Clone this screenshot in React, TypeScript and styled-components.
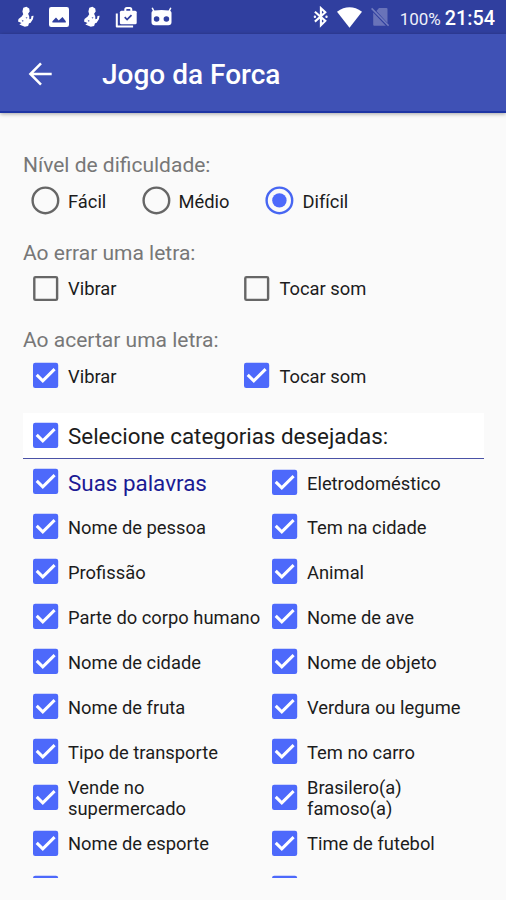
import React from "react";
import styled, { createGlobalStyle, css } from "styled-components";

const GlobalStyle = createGlobalStyle`
  * { box-sizing: border-box; }
  body { margin: 0; background: #fafafa; font-family: Roboto, "Liberation Sans", sans-serif; }
`;

const Screen = styled.div`
  display: flex;
  flex-direction: column;
  width: 506px;
  height: 900px;
  overflow: hidden;
  background: #fafafa;
`;

const StatusBar = styled.div`
  display: flex;
  justify-content: space-between;
  flex: none;
  height: 34px;
  padding: 0 11px 0 17px;
  background: #303f9f;
  color: #fff;
`;

const StatusGroup = styled.div<{ $gap: number }>`
  display: flex;
  align-items: center;
  gap: ${(p) => p.$gap}px;
  svg { display: block; flex: none; }
`;

const Readout = styled.div`
  display: flex;
  align-items: center;
  gap: 4px;
  margin-left: 3px;
  line-height: 24px;
  padding-top: 3px;
`;

const Battery = styled.span`
  font-size: 17px;
  color: #eef0fa;
`;

const Clock = styled.span`
  font-size: 19.8px;
  font-weight: 500;
`;

const AppBar = styled.header`
  display: flex;
  align-items: center;
  flex: none;
  height: 79px;
  padding: 0 26px;
  gap: 48px;
  background: #3f51b5;
  border-bottom: 2px solid #1e35a4;
  box-shadow: 0 1px 4px rgba(0, 0, 0, 0.35);
  color: #fff;
  svg { display: block; margin-top: 2px; }
`;

const Title = styled.h1`
  margin: 0;
  padding-top: 5px;
  font-size: 28px;
  line-height: 34px;
  font-weight: 500;
`;

const Content = styled.main`
  display: flex;
  flex-direction: column;
  padding: 39px 22px 0 23px;
`;

const Section = styled.section`
  display: flex;
  flex-direction: column;
  height: 87.5px;
`;

const SectionLabel = styled.h2`
  margin: 0;
  height: 26px;
  font-size: 21px;
  line-height: 26px;
  font-weight: 400;
  color: #777;
`;

const OptionRow = styled.div<{ $columns: string }>`
  display: grid;
  grid-template-columns: ${(p) => p.$columns};
  height: 45px;
  padding-left: 8px;
`;

const Option = styled.label<{ $tall?: boolean; $drop?: number }>`
  display: flex;
  align-items: center;
  gap: 8px;
  height: ${(p) => (p.$tall ? 46 : 45)}px;
  padding-top: ${(p) => p.$drop ?? 0}px;
  svg { display: block; flex: none; }
`;

const OptionText = styled.span<{ $large?: boolean; $accent?: boolean }>`
  padding-top: 2.4px;
  font-size: 18.35px;
  line-height: 21.5px;
  white-space: pre-line;
  color: #1c1c1c;
  ${(p) => p.$large && css`font-size: 22.4px; line-height: 28px;`}
  ${(p) => p.$accent && css`color: #1a1a94;`}
`;

const CategoryHeader = styled.div`
  display: flex;
  flex: none;
  height: 46.5px;
  margin-top: -2px;
  padding-left: 8px;
  background: #fff;
  border-bottom: 1px solid #4a52a6;
`;

const CategoryList = styled.div`
  display: grid;
  grid-template-columns: 239px 1fr;
  align-content: start;
  height: 419px;
  padding-left: 8px;
  overflow: hidden;
`;

function Check({ on = true }: { on?: boolean }) {
  return (
    <svg width="29" height="29" viewBox="0 0 29 29" fill="none">
      {on ? (
        <>
          <rect x="2" y="1.8" width="25.2" height="25.2" rx="2.2" fill="#4d69fb" />
          <path d="M5.7 13.9l6.1 6L23.6 8.1" stroke="#fff" strokeWidth="3" />
        </>
      ) : (
        <rect x="3.3" y="3.1" width="22.8" height="22.8" rx="1.2" stroke="#666" strokeWidth="2.4" />
      )}
    </svg>
  );
}

function Radio({ on = false }: { on?: boolean }) {
  const color = on ? "#4766f2" : "#666";
  return (
    <svg width="29" height="29" viewBox="0 0 29 29" fill="none">
      <circle cx="14.4" cy="14.4" r="12.8" stroke={color} strokeWidth="2.4" />
      {on && <circle cx="14.4" cy="14.4" r="7.2" fill="#4d69fb" />}
    </svg>
  );
}

function FigureIcon() {
  return (
    <svg width="18" height="22" viewBox="0 0 18 22" fill="#fff">
      <path d="M6.3 1.8L9.4.8l2.8 1.6.5 3.1-1.6 2.3 1.1 2.4.2 3 1.6-.4.5-2.8 2.1-.3-.7 3.6-2.5 3.6-1.4.4-.9 2.6-3.3.8-3-1.3-2.5-.9L4.5 17 1 15.6l.5-2.6 3.2-2.4 1.5-2.4-.8-2.8z" />
      <path d="M4.6 13.8l2.2 1-1.2 1.2zM8.6 11l2 .6-1.2 1.1z" fill="#5967b5" />
    </svg>
  );
}

function PictureIcon() {
  return (
    <svg width="20" height="20" viewBox="0 0 20 20">
      <rect width="20" height="20" rx="2.2" fill="#fff" />
      <path d="M3.4 15.4v-1.2L7 10.6l2.7 2.8 3.8-3.4 3.3 4.2v1.2z" fill="#303f9f" />
    </svg>
  );
}

function CaseIcon() {
  return (
    <svg width="22" height="21" viewBox="0 0 22 21" fill="none">
      <path d="M1.8 6.4v13.1h16.3" stroke="#fff" strokeWidth="2" strokeLinejoin="round" />
      <path d="M10.3 4.3V2.5Q10.3 1 11.8 1h3q1.5 0 1.5 1.5v1.8" stroke="#fff" strokeWidth="2" />
      <rect x="4.9" y="3.8" width="16.8" height="13.4" rx="1.5" fill="#fff" />
      <path d="M9.7 10.2l2.4 2.4 4.4-4.5" stroke="#303f9f" strokeWidth="1.7" />
    </svg>
  );
}

function RobotIcon() {
  return (
    <svg width="22" height="20" viewBox="0 0 22 20">
      <path d="M1.2.8l1.8 3.8M19.8.8L18 4.6" stroke="#fff" strokeWidth="1.5" />
      <path d="M.5 6q0-2.2 3-2.5 7-.8 14 0 3 .3 3 2.5v9.2q0 3-3.2 3H3.7q-3.2 0-3.2-3z" fill="#fff" />
      <circle cx="5.6" cy="12" r="2.8" fill="#303f9f" />
      <circle cx="15.4" cy="12" r="2.8" fill="#303f9f" />
    </svg>
  );
}

function BluetoothIcon() {
  return (
    <svg width="15" height="22" viewBox="0 0 15 22" fill="none" stroke="#fff" strokeWidth="2.1">
      <path d="M1.9 5.8l10.4 9.1-4.4 4.3V2.2l4.4 4.1L1.9 15.6" />
      <circle cx="1.9" cy="10.8" r=".5" fill="#fff" strokeWidth="1.4" />
      <circle cx="13.5" cy="10.8" r=".5" fill="#fff" strokeWidth="1.4" />
    </svg>
  );
}

function WifiIcon() {
  return (
    <svg width="26" height="21" viewBox="0 0 26 21">
      <path d="M1 4.7Q13.5-4 26 4.7L13.5 20.7z" fill="#fff" />
    </svg>
  );
}

function NoSimIcon() {
  return (
    <svg width="19" height="20" viewBox="0 0 19 20">
      <path d="M9 1h7.5q1 0 1 1v14L6.4 4zM3.2 5.6L15.8 18.8H4.2q-1 0-1-1z" fill="#6973b9" />
      <path d="M1.6 1.4l17 17.2" stroke="#737dbf" strokeWidth="1.5" />
    </svg>
  );
}

function BackIcon() {
  return (
    <svg width="28" height="26" viewBox="0 0 28 26" fill="none" stroke="#fff" strokeWidth="2.5">
      <path d="M15 2.4L4.4 13 15 23.6M4.4 13h21.3" />
    </svg>
  );
}

type Category = { name: string; accent?: boolean; tall?: boolean; drop?: number };

const categories: Category[] = [
  { name: "Suas palavras", accent: true },
  { name: "Eletrodoméstico", drop: 2 },
  { name: "Nome de pessoa" },
  { name: "Tem na cidade" },
  { name: "Profissão" },
  { name: "Animal" },
  { name: "Parte do corpo humano" },
  { name: "Nome de ave" },
  { name: "Nome de cidade" },
  { name: "Nome de objeto" },
  { name: "Nome de fruta" },
  { name: "Verdura ou legume" },
  { name: "Tipo de transporte" },
  { name: "Tem no carro" },
  { name: "Vende no\nsupermercado", tall: true },
  { name: "Brasilero(a)\nfamoso(a)", tall: true },
  { name: "Nome de esporte", tall: true },
  { name: "Time de futebol", tall: true },
  { name: "" },
  { name: "" },
];

function Feedback({ title, on }: { title: string; on: boolean }) {
  return (
    <Section>
      <SectionLabel>{title}</SectionLabel>
      <OptionRow $columns="211.4px 1fr">
        <Option><Check on={on} /><OptionText>Vibrar</OptionText></Option>
        <Option><Check on={on} /><OptionText>Tocar som</OptionText></Option>
      </OptionRow>
    </Section>
  );
}

export default function App() {
  return (
    <>
      <GlobalStyle />
      <Screen>
        <StatusBar>
          <StatusGroup $gap={14}>
            <FigureIcon />
            <PictureIcon />
            <FigureIcon />
            <CaseIcon />
            <RobotIcon />
          </StatusGroup>
          <StatusGroup $gap={8}>
            <BluetoothIcon />
            <WifiIcon />
            <NoSimIcon />
            <Readout>
              <Battery>100%</Battery>
              <Clock>21:54</Clock>
            </Readout>
          </StatusGroup>
        </StatusBar>
        <AppBar>
          <BackIcon />
          <Title>Jogo da Forca</Title>
        </AppBar>
        <Content>
          <Section>
            <SectionLabel>Nível de dificuldade:</SectionLabel>
            <OptionRow $columns="110.5px 123.9px 1fr">
              <Option><Radio /><OptionText>Fácil</OptionText></Option>
              <Option><Radio /><OptionText>Médio</OptionText></Option>
              <Option><Radio on /><OptionText>Difícil</OptionText></Option>
            </OptionRow>
          </Section>
          <Feedback title="Ao errar uma letra:" on={false} />
          <Feedback title="Ao acertar uma letra:" on />
          <CategoryHeader>
            <Option><Check /><OptionText $large>Selecione categorias desejadas:</OptionText></Option>
          </CategoryHeader>
          <CategoryList>
            {categories.map((c, i) => (
              <Option key={i} $tall={c.tall} $drop={c.drop}>
                <Check />
                <OptionText $large={c.accent} $accent={c.accent}>{c.name}</OptionText>
              </Option>
            ))}
          </CategoryList>
        </Content>
      </Screen>
    </>
  );
}
